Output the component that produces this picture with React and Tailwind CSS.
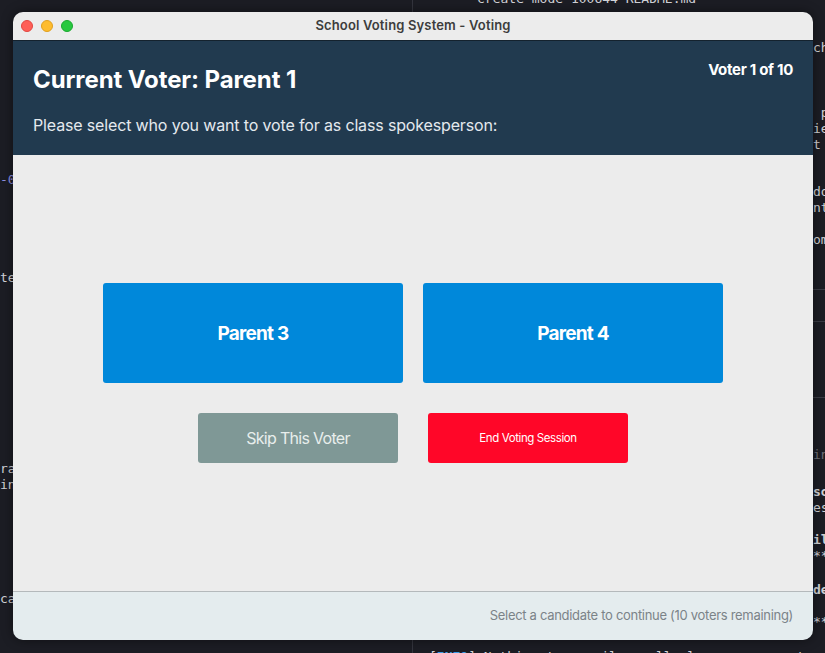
import React from "react";

function Line({ children, className = "" }) {
  return <div className={`h-[16px] shrink-0 leading-[16px] whitespace-pre ${className}`}>{children}</div>;
}

function Gap({ h }) {
  return <div className={`shrink-0 ${h}`} />;
}

export default function App() {
  return (
    <div className="relative w-[825px] h-[653px] overflow-hidden bg-[#1c1d24] text-[13px] text-[#d2d3d8]" style={{ fontFamily: '"DejaVu Sans Mono", "Liberation Mono", monospace' }}>
      {/* terminal panes */}
      <div className="flex h-full">
        <div className="w-[412px] shrink-0 flex flex-col">
          <Gap h="h-[172px]" />
          <Line className="text-[#8e8fe0]">-00:00</Line>
          <Gap h="h-[82px]" />
          <Line>tests</Line>
          <Gap h="h-[175px]" />
          <Line>rasing</Line>
          <Line>ing</Line>
          <Gap h="h-[98px]" />
          <Line>car</Line>
        </div>
        <div className="w-px bg-[#34353e] shrink-0" />
        <div className="flex-1 flex flex-col">
          <Line className="mt-[-9px] pl-[64px]">create mode 100644 README.md</Line>
          <Gap h="h-[33px]" />
          <Line className="pl-[400px]">ch</Line>
          <Gap h="h-[49px]" />
          <Line className="pl-[400px]"> p</Line>
          <Line className="pl-[400px]">ie</Line>
          <Line className="pl-[400px]">t</Line>
          <Gap h="h-[31px]" />
          <Line className="pl-[400px]">do</Line>
          <Line className="pl-[400px]">nt</Line>
          <Gap h="h-[16px]" />
          <Line className="pl-[400px]">om</Line>
          <Gap h="h-[41px]" />
          <div className="h-px shrink-0 bg-[#3a3b44]" />
          <Gap h="h-[31px]" />
          <div className="h-px shrink-0 bg-[#3a3b44]" />
          <Gap h="h-[75px]" />
          <div className="h-px shrink-0 bg-[#3a3b44]" />
          <Gap h="h-[49px]" />
          <Line className="pl-[400px] text-[#6e6f78]">in</Line>
          <Gap h="h-[21px]" />
          <Line className="pl-[400px] font-bold">so</Line>
          <Line className="pl-[400px]">es</Line>
          <Gap h="h-[16px]" />
          <Line className="pl-[400px] font-bold">il</Line>
          <Line className="pl-[400px]">**</Line>
          <Gap h="h-[18px]" />
          <Line className="pl-[400px] font-bold">de</Line>
          <Gap h="h-[16px]" />
          <Line className="pl-[400px]">**</Line>
          <Gap h="h-[19px]" />
          <Line className="pl-[16px]">[<span className="text-[#3b9ee8] font-bold">INFO</span>] Nothing to compile - all classes are up to date</Line>
        </div>
      </div>

      {/* app window */}
      <div
        className="absolute left-[13px] top-[12px] w-[800px] h-[628px] rounded-[10px] overflow-hidden flex flex-col shadow-[0_0_12px_rgba(0,0,0,0.45)]"
        style={{ fontFamily: 'Inter, "Noto Sans", "Liberation Sans", sans-serif' }}
      >
        <div className="h-[28px] shrink-0 bg-[#ececec] relative flex items-center justify-center">
          <div className="absolute left-[8px] top-[8px] flex gap-[8px]">
            <div className="w-[12px] h-[12px] rounded-full bg-[#fe5f57] border border-[#e14640]" />
            <div className="w-[12px] h-[12px] rounded-full bg-[#febc2e] border border-[#df9f1f]" />
            <div className="w-[12px] h-[12px] rounded-full bg-[#28c840] border border-[#1aa82e]" />
          </div>
          <span className="text-[13px] font-semibold text-[#3c3c3c] tracking-[0.15px]">School Voting System - Voting</span>
        </div>
        <div className="h-[115px] shrink-0 bg-[#213a4f] border-t border-[#14222e] px-[20px] pt-[24px] flex flex-col">
          <div className="flex justify-between items-start">
            <div className="text-[24px] leading-[30px] font-bold text-white tracking-[-0.1px]">Current Voter: Parent 1</div>
            <div className="text-[15px] leading-[20px] font-bold text-white mt-[-5px] tracking-[-0.3px]">Voter 1 of 10</div>
          </div>
          <div className="mt-[18px] text-[16px] leading-[24px] text-[#e4e9ee] tracking-[-0.15px]">Please select who you want to vote for as class spokesperson:</div>
        </div>
        <div className="flex-1 bg-[#ececec] flex flex-col items-center justify-center gap-[30px]">
          <div className="flex gap-[20px]">
            <button className="w-[300px] h-[100px] rounded-[3px] bg-[#0088da] text-white text-[19px] font-bold tracking-[-0.8px] pt-[2px]">Parent 3</button>
            <button className="w-[300px] h-[100px] rounded-[3px] bg-[#0088da] text-white text-[19px] font-bold tracking-[-0.8px] pt-[2px]">Parent 4</button>
          </div>
          <div className="flex gap-[30px]">
            <button className="w-[200px] h-[50px] rounded-[3px] bg-[#7f9896] text-[#e8eeec] text-[16px] tracking-[-0.7px]">Skip This Voter</button>
            <button className="w-[200px] h-[50px] rounded-[3px] bg-[#ff0628] text-white text-[11.5px] tracking-[-0.4px] pt-[2px]">End Voting Session</button>
          </div>
        </div>
        <div className="h-[49px] shrink-0 bg-[#e4ecee] border-t border-[#b4b9bb] flex items-center justify-end px-[20px]">
          <span className="text-[13px] text-[#7b8388] tracking-[-0.3px]">Select a candidate to continue (10 voters remaining)</span>
        </div>
      </div>
    </div>
  );
}
